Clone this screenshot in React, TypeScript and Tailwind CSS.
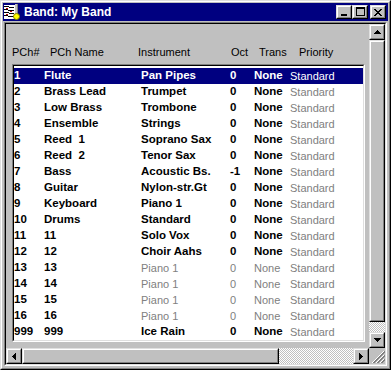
import React from "react";

type Row = {
  n: string;
  name: string;
  inst: string;
  oct: string;
  active: boolean;
  sel?: boolean;
};

const rows: Row[] = [
  { n: "1", name: "Flute", inst: "Pan Pipes", oct: "0", active: true, sel: true },
  { n: "2", name: "Brass Lead", inst: "Trumpet", oct: "0", active: true },
  { n: "3", name: "Low Brass", inst: "Trombone", oct: "0", active: true },
  { n: "4", name: "Ensemble", inst: "Strings", oct: "0", active: true },
  { n: "5", name: "Reed  1", inst: "Soprano Sax", oct: "0", active: true },
  { n: "6", name: "Reed  2", inst: "Tenor Sax", oct: "0", active: true },
  { n: "7", name: "Bass", inst: "Acoustic Bs.", oct: "-1", active: true },
  { n: "8", name: "Guitar", inst: "Nylon-str.Gt", oct: "0", active: true },
  { n: "9", name: "Keyboard", inst: "Piano 1", oct: "0", active: true },
  { n: "10", name: "Drums", inst: "Standard", oct: "0", active: true },
  { n: "11", name: "11", inst: "Solo Vox", oct: "0", active: true },
  { n: "12", name: "12", inst: "Choir Aahs", oct: "0", active: true },
  { n: "13", name: "13", inst: "Piano 1", oct: "0", active: false },
  { n: "14", name: "14", inst: "Piano 1", oct: "0", active: false },
  { n: "15", name: "15", inst: "Piano 1", oct: "0", active: false },
  { n: "16", name: "16", inst: "Piano 1", oct: "0", active: false },
  { n: "999", name: "999", inst: "Ice Rain", oct: "0", active: true },
];

function Raised({ className = "", children }: { className?: string; children?: React.ReactNode }) {
  return (
    <div className={"border border-t-[#dfdfdf] border-l-[#dfdfdf] border-r-black border-b-black bg-[#c0c0c0] " + className}>
      <div className="w-full h-full border border-t-white border-l-white border-r-[#808080] border-b-[#808080] flex items-center justify-center">
        {children}
      </div>
    </div>
  );
}

function Pixels({ pattern, w, h }: { pattern: string[]; w: number; h: number }) {
  const rects: React.ReactNode[] = [];
  pattern.forEach((line, y) => {
    for (let x = 0; x < line.length; x++) {
      if (line[x] === "#") rects.push(<rect key={x + "-" + y} x={x} y={y} width={1} height={1} fill="#000" />);
    }
  });
  return (
    <svg width={w} height={h} viewBox={`0 0 ${w} ${h}`} shapeRendering="crispEdges">
      {rects}
    </svg>
  );
}

const upArrow = ["...#...", "..###..", ".#####.", "#######"];
const downArrow = ["#######", ".#####.", "..###..", "...#..."];
const leftArrow = ["...#", "..##", ".###", "####", ".###", "..##", "...#"];
const rightArrow = ["#...", "##..", "###.", "####", "###.", "##..", "#..."];
const closeX = ["##....##", ".##..##.", "..####..", "...##...", "..####..", ".##..##.", "##....##"];

function TitleIcon() {
  return (
    <svg width="16" height="16" viewBox="0 0 16 16" shapeRendering="crispEdges">
      <rect x="0" y="1" width="12" height="14" fill="#fff" />
      <rect x="0" y="2" width="5" height="1" fill="#000" />
      <rect x="5" y="3" width="5" height="1" fill="#000" />
      <rect x="0" y="5" width="4" height="1" fill="#000" />
      <rect x="4" y="6" width="6" height="1" fill="#000" />
      <rect x="0" y="8" width="5" height="1" fill="#000" />
      <rect x="5" y="9" width="5" height="1" fill="#000" />
      <rect x="0" y="11" width="4" height="1" fill="#000" />
      <rect x="4" y="12" width="6" height="1" fill="#000" />
      <rect x="2" y="4" width="2" height="1" fill="#c00000" />
      <rect x="6" y="7" width="2" height="1" fill="#c00000" />
      <rect x="2" y="10" width="2" height="1" fill="#c00000" />
      <rect x="11" y="0" width="2" height="12" fill="#c0c0c0" />
      <rect x="13" y="0" width="1" height="12" fill="#808080" />
      <circle cx="12.5" cy="12.5" r="3" fill="#ffff00" stroke="#808000" strokeWidth="1" shapeRendering="auto" />
    </svg>
  );
}

function Grip() {
  return (
    <svg width="16" height="16" viewBox="0 0 16 16" shapeRendering="crispEdges">
      {[3, 7, 11].map((o) => (
        <g key={o}>
          {Array.from({ length: 15 - o }).map((_, i) => (
            <React.Fragment key={i}>
              <rect x={o + i} y={14 - i} width="1" height="1" fill="#fff" />
              <rect x={o + i + 1} y={14 - i} width="1" height="1" fill="#808080" />
              <rect x={o + i + 2} y={14 - i} width="1" height="1" fill="#808080" />
            </React.Fragment>
          ))}
        </g>
      ))}
    </svg>
  );
}

export default function App() {
  return (
    <div className="w-[391px] h-[370px] bg-[#c0c0c0] border border-t-[#dfdfdf] border-l-[#dfdfdf] border-r-black border-b-black font-['Liberation_Sans',Arial,sans-serif] overflow-hidden">
      <div className="h-full border border-t-white border-l-white border-r-[#808080] border-b-[#808080] p-px flex flex-col">
        {/* Title bar */}
        <div className="h-[18px] bg-[#000080] flex items-center pl-px pr-[2px] shrink-0">
          <TitleIcon />
          <span className="ml-[4px] text-white font-bold text-[12px] leading-none">Band: My Band</span>
          <div className="ml-auto flex items-center">
            <Raised className="w-[16px] h-[14px]">
              <div className="w-full h-full relative">
                <div className="absolute left-[3px] top-[7px] w-[6px] h-[2px] bg-black" />
              </div>
            </Raised>
            <Raised className="w-[16px] h-[14px]">
              <div className="w-full h-full relative">
                <div className="absolute left-[2px] top-[0px] w-[9px] h-[9px] border border-black border-t-2" />
              </div>
            </Raised>
            <Raised className="w-[16px] h-[14px] ml-[2px]">
              <Pixels pattern={closeX} w={8} h={7} />
            </Raised>
          </div>
        </div>

        {/* Client edge */}
        <div className="flex-1 mx-px mt-px mb-px border border-t-[#808080] border-l-[#808080] border-r-white border-b-white">
          <div className="w-full h-full border border-t-black border-l-black border-r-[#dfdfdf] border-b-[#dfdfdf] flex flex-col">
            <div className="flex h-[324px]">
              {/* Main area */}
              <div className="w-[363px] h-full pt-[20px]">
                <div className="flex h-[16px] items-center text-[11px] text-black pl-[6px] whitespace-nowrap">
                  <div className="w-[38px]">PCh#</div>
                  <div className="w-[88px]">PCh Name</div>
                  <div className="w-[93px]">Instrument</div>
                  <div className="w-[28px]">Oct</div>
                  <div className="w-[40px]">Trans</div>
                  <div>Priority</div>
                </div>
                <div className="ml-[6px] mt-[4px] w-[353px] h-[278px] border border-t-[#808080] border-l-[#808080] border-r-white border-b-white">
                  <div className="w-full h-full border border-t-black border-l-black border-r-[#dfdfdf] border-b-[#dfdfdf] bg-white pt-[2px]">
                    {rows.map((r) => {
                      const bold = r.sel ? "font-bold text-white" : "font-bold text-black";
                      const dim = r.active ? bold : "font-normal text-[#808080]";
                      const dimSize = r.active ? "text-[11.5px]" : "text-[11px]";
                      return (
                        <div
                          key={r.n}
                          className={
                            "flex h-[16px] items-center whitespace-pre leading-none " +
                            (r.sel ? "bg-[#000080]" : "")
                          }
                        >
                          <div className={"w-[30px] text-[11.5px] " + bold}>{r.n}</div>
                          <div className={"w-[97px] text-[11.5px] " + bold}>{r.name}</div>
                          <div className={"w-[89px] " + dimSize + " " + dim}>{r.inst}</div>
                          <div className={"w-[24px] " + dimSize + " " + dim}>{r.oct}</div>
                          <div className={"w-[36px] " + dimSize + " " + dim}>None</div>
                          <div className={"text-[11px] font-normal " + (r.sel ? "text-white" : "text-[#808080]")}>
                            Standard
                          </div>
                        </div>
                      );
                    })}
                  </div>
                </div>
              </div>
              {/* Vertical scrollbar */}
              <div className="w-[16px] h-full flex flex-col">
                <Raised className="w-[16px] h-[16px] shrink-0">
                  <Pixels pattern={upArrow} w={7} h={4} />
                </Raised>
                <Raised className="w-[16px] h-[282px] shrink-0" />
                <div className="flex-1 bg-[repeating-conic-gradient(#c0c0c0_0_25%,#ffffff_0_50%)] bg-[length:2px_2px]" />
                <Raised className="w-[16px] h-[16px] shrink-0">
                  <Pixels pattern={downArrow} w={7} h={4} />
                </Raised>
              </div>
            </div>
            {/* Horizontal scrollbar */}
            <div className="flex h-[16px]">
              <div className="w-[363px] h-full flex">
                <Raised className="w-[16px] h-[16px] shrink-0">
                  <Pixels pattern={leftArrow} w={4} h={7} />
                </Raised>
                <Raised className="w-[257px] h-[16px] shrink-0" />
                <div className="flex-1 bg-[repeating-conic-gradient(#c0c0c0_0_25%,#ffffff_0_50%)] bg-[length:2px_2px]" />
                <Raised className="w-[16px] h-[16px] shrink-0">
                  <Pixels pattern={rightArrow} w={4} h={7} />
                </Raised>
              </div>
              <div className="w-[16px] h-[16px] bg-[#c0c0c0]">
                <Grip />
              </div>
            </div>
          </div>
        </div>
      </div>
    </div>
  );
}
